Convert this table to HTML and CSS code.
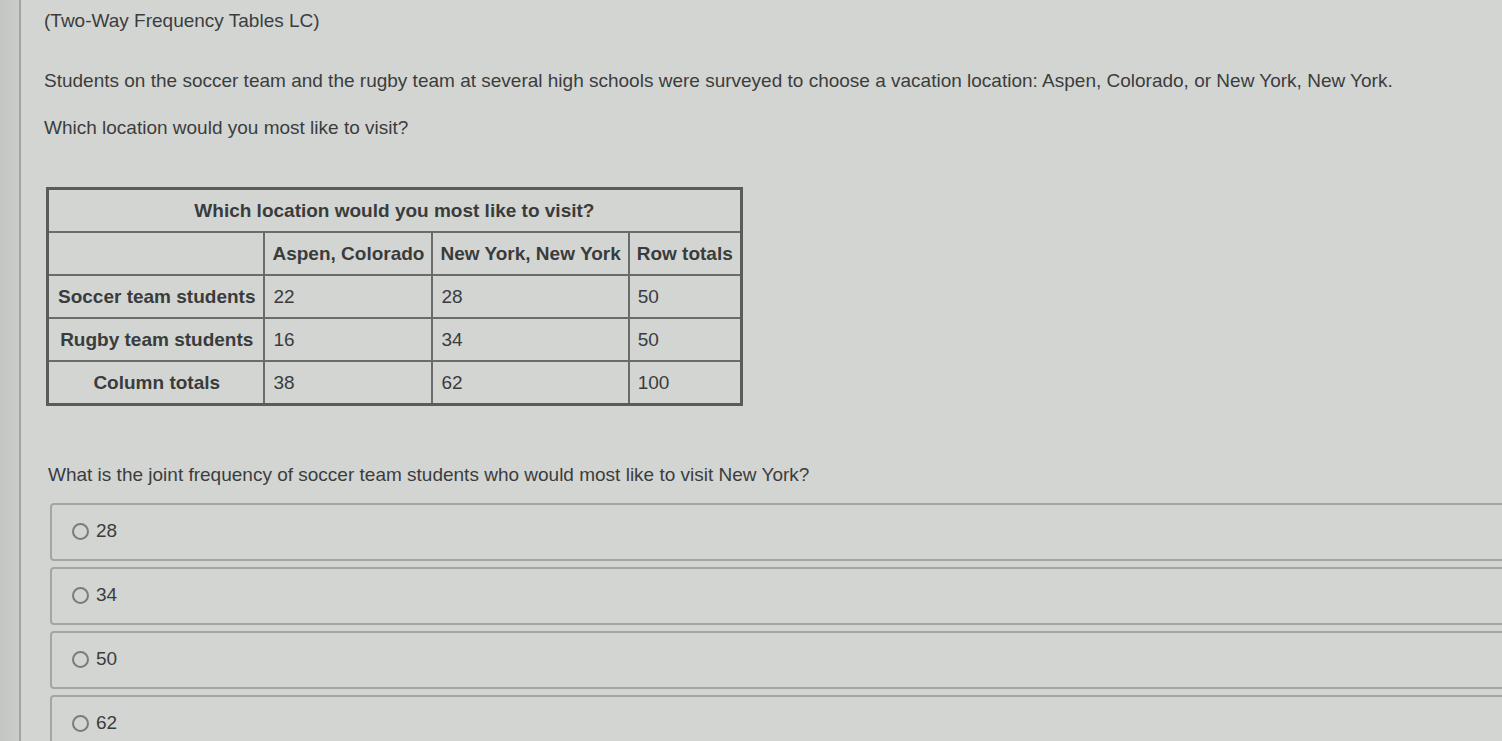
FILE: index.html
```html
<!DOCTYPE html>
<html>
<head>
<meta charset="utf-8">
<link rel="stylesheet" href="styles.css">
</head>
<body>
<div class="page">
  <div class="rail"></div>
  <main class="content">
    <p class="title">(Two-Way Frequency Tables LC)</p>
    <p class="intro">Students on the soccer team and the rugby team at several high schools were surveyed to choose a vacation location: Aspen, Colorado, or New York, New York.</p>
    <p class="prompt">Which location would you most like to visit?</p>
    <table class="freq">
      <tr><th colspan="4" class="caption">Which location would you most like to visit?</th></tr>
      <tr><th class="label"></th><th>Aspen, Colorado</th><th>New York, New York</th><th>Row totals</th></tr>
      <tr><th class="label">Soccer team students</th><td>22</td><td>28</td><td>50</td></tr>
      <tr><th class="label">Rugby team students</th><td>16</td><td>34</td><td>50</td></tr>
      <tr><th class="label">Column totals</th><td>38</td><td>62</td><td>100</td></tr>
    </table>
    <p class="question">What is the joint frequency of soccer team students who would most like to visit New York?</p>
    <div class="options">
      <label class="option"><span class="radio"></span><span>28</span></label>
      <label class="option"><span class="radio"></span><span>34</span></label>
      <label class="option"><span class="radio"></span><span>50</span></label>
      <label class="option"><span class="radio"></span><span>62</span></label>
    </div>
  </main>
</div>
</body>
</html>
```

FILE: styles.css
```css
html, body {
  margin: 0;
  padding: 0;
  height: 100%;
  overflow: hidden;
}
body {
  background: #d3d5d3;
  color: #3b3d3d;
  font-family: "Liberation Sans", Arial, sans-serif;
}
.page {
  display: flex;
  min-height: 741px;
}
.rail {
  width: 19px;
  flex: none;
  background: linear-gradient(to right, #c4c6c4, #cbcdcb);
  border-right: 2px solid #a3a5a3;
}
.content {
  flex: 1;
  padding-left: 23px;
}
p {
  margin: 0;
}
.title {
  font-size: 19px;
  margin-top: 10px;
}
.intro {
  font-size: 19px;
  margin-top: 38px;
}
.prompt {
  font-size: 19px;
  margin-top: 25px;
}
.freq {
  margin-top: 48px;
  margin-left: 2px;
  border-collapse: collapse;
  border: 3px solid #5a5c5c;
  font-size: 19px;
  color: #3a3c3c;
}
.freq th, .freq td {
  border: 2px solid #6a6c6c;
  height: 41px;
  padding: 0 7px;
  white-space: nowrap;
}
.freq th {
  font-weight: bold;
  text-align: center;
}
.freq .label {
  padding: 0 8px 0 9px;
}
.freq td {
  text-align: left;
  font-weight: normal;
  padding-left: 8px;
}
.question {
  font-size: 19px;
  margin-top: 58px;
  margin-left: 4px;
}
.options {
  margin-top: 17px;
  margin-left: 6px;
  margin-right: -20px;
  display: flex;
  flex-direction: column;
  gap: 6px;
}
.option {
  display: flex;
  align-items: center;
  gap: 7px;
  height: 54px;
  padding-left: 20px;
  padding-bottom: 2px;
  box-sizing: border-box;
  height: 58px;
  border: 2px solid #a4a6a6;
  border-radius: 4px;
  font-size: 19px;
}
.radio {
  width: 13px;
  height: 13px;
  border: 2px solid #7a7c7c;
  border-radius: 50%;
  display: inline-block;
}
```
